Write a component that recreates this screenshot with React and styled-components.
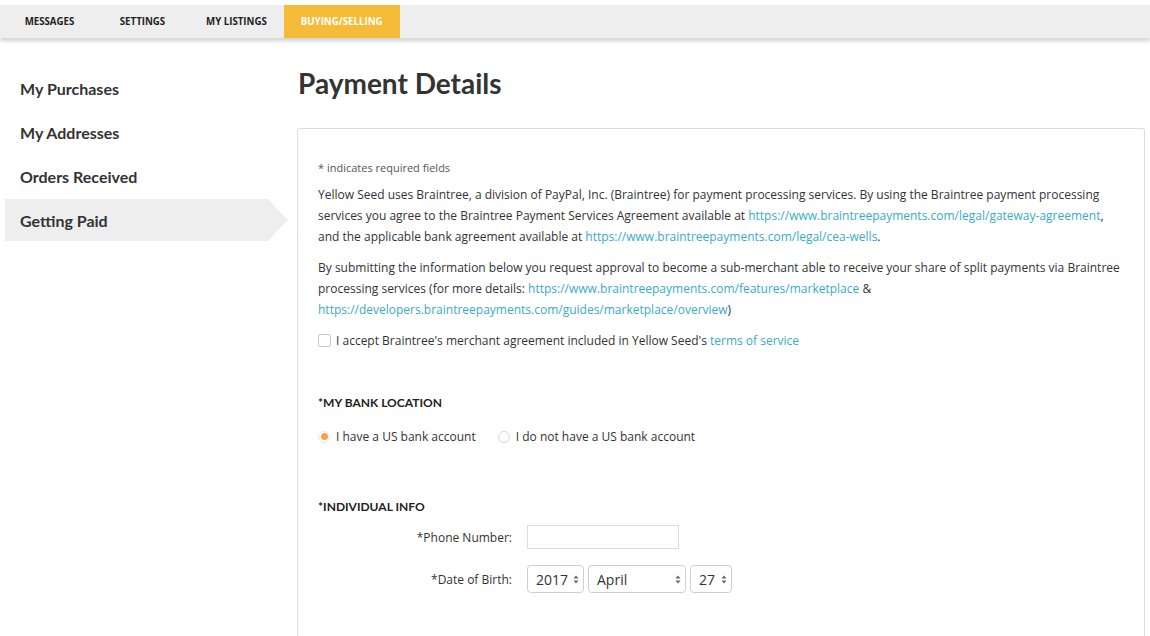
import React from "react";
import styled, { createGlobalStyle } from "styled-components";

const Global = createGlobalStyle`
  html, body { margin: 0; padding: 0; background: #fff; }
  body { font-family: "Open Sans", "Liberation Sans", sans-serif; color: #333; }
  * { box-sizing: border-box; }
`;

const Page = styled.div`
  width: 1150px;
  padding-top: 5px;
`;

const NavBar = styled.nav`
  display: flex;
  height: 33px;
  background: #eeeeee;
  padding-left: 3px;
  box-shadow: 0 3px 4px rgba(0, 0, 0, 0.18);
  position: relative;
  z-index: 1;
`;

const Tab = styled.a`
  display: flex;
  align-items: center;
  justify-content: center;
  min-width: 93px;
  padding: 0 17px;
  font-family: "Open Sans", sans-serif;
  font-weight: 700;
  font-size: 9.7px;
  color: ${(p) => (p.$active ? "#fff" : "#222")};
  background: ${(p) => (p.$active ? "#f7bb3a" : "transparent")};
  text-transform: uppercase;
  text-decoration: none;
`;

const Body = styled.div`
  display: flex;
  align-items: flex-start;
`;

const Sidebar = styled.aside`
  width: 297px;
  flex-shrink: 0;
  padding-left: 5px;
  padding-top: 29px;
  display: flex;
  flex-direction: column;
  gap: 2px;
`;

const SideItem = styled.a`
  position: relative;
  display: flex;
  align-items: center;
  height: 42px;
  width: 263px;
  padding-left: 15px;
  font-family: Lato, sans-serif;
  font-weight: 700;
  font-size: 16px;
  color: #333;
  text-decoration: none;
  background: ${(p) => (p.$active ? "#eeeeee" : "transparent")};
  &::after {
    content: "";
    display: ${(p) => (p.$active ? "block" : "none")};
    position: absolute;
    right: -20px;
    top: 0;
    border-top: 21px solid transparent;
    border-bottom: 21px solid transparent;
    border-left: 20px solid #eeeeee;
  }
`;

const Main = styled.main`
  width: 848px;
  padding-top: 28px;
`;

const Title = styled.h1`
  margin: 0 0 28px 1px;
  font-family: Lato, sans-serif;
  font-weight: 700;
  font-size: 28px;
  line-height: 34px;
  color: #333;
`;

const Panel = styled.section`
  border: 1px solid #dddddd;
  border-radius: 3px;
  border-bottom: none;
  padding: 30px 20px 40px 20px;
  min-height: 520px;
`;

const Required = styled.div`
  font-size: 11px;
  line-height: 18px;
  color: #555;
  margin-bottom: 7px;
`;

const Para = styled.p`
  margin: 0 0 10px;
  font-size: 12px;
  line-height: 21px;
  color: #333;
`;

const Link = styled.a`
  color: #38abc6;
  text-decoration: none;
`;

const CheckRow = styled.label`
  display: flex;
  align-items: center;
  gap: 5px;
  height: 21px;
  font-size: 12px;
  color: #333;
`;

const Checkbox = styled.span`
  width: 13px;
  height: 13px;
  border: 1px solid #c8c8c8;
  border-radius: 2px;
  background: #fff;
`;

const SectionTitle = styled.h3`
  margin: ${(p) => p.$mt}px 0 0;
  font-family: Lato, sans-serif;
  font-weight: 700;
  font-size: 12px;
  line-height: 18px;
  color: #222;
  text-transform: uppercase;
`;

const RadioGroup = styled.div`
  display: flex;
  align-items: center;
  gap: 22px;
  margin-top: 14px;
`;

const RadioLabel = styled.label`
  display: flex;
  align-items: center;
  gap: 6px;
  font-size: 12px;
  line-height: 21px;
  color: #333;
`;

const Radio = styled.span`
  width: 12px;
  height: 12px;
  border-radius: 50%;
  border: 1px solid ${(p) => (p.$checked ? "#e6e6e6" : "#d6d6d6")};
  background: #fff;
  display: flex;
  align-items: center;
  justify-content: center;
  &::after {
    content: "";
    display: ${(p) => (p.$checked ? "block" : "none")};
    width: 7px;
    height: 7px;
    border-radius: 50%;
    background: #f5a540;
  }
`;

const FormGrid = styled.div`
  display: grid;
  grid-template-columns: 194px auto;
  column-gap: 15px;
  row-gap: 16px;
  align-items: center;
  margin-top: 9px;
`;

const FieldLabel = styled.label`
  text-align: right;
  font-size: 12px;
  color: #333;
`;

const TextInput = styled.input`
  width: 152px;
  height: 24px;
  border: 1px solid #dcdcdc;
  border-radius: 0;
  padding: 0 6px;
  font: inherit;
`;

const SelectRow = styled.div`
  display: flex;
  gap: 4px;
`;

const SelectWrap = styled.div`
  position: relative;
  width: ${(p) => p.$w}px;
  height: 28px;
`;

const Select = styled.select`
  appearance: none;
  -webkit-appearance: none;
  width: 100%;
  height: 100%;
  border: 1px solid #cfcfcf;
  border-radius: 4px;
  background: #fff;
  padding: 0 0 0 8px;
  font-family: "Open Sans", sans-serif;
  font-size: 14px;
  color: #333;
`;

const Arrows = styled.svg`
  position: absolute;
  right: 5px;
  top: 9.5px;
  pointer-events: none;
`;

const DateSelect = ({ w, value, options }) => (
  <SelectWrap $w={w}>
    <Select defaultValue={value}>
      {options.map((o) => (
        <option key={o}>{o}</option>
      ))}
    </Select>
    <Arrows width="6" height="9" viewBox="0 0 6 9">
      <path d="M3 0.5 L5.5 3.6 L0.5 3.6 Z" fill="#666" />
      <path d="M0.5 5.4 L5.5 5.4 L3 8.5 Z" fill="#666" />
    </Arrows>
  </SelectWrap>
);

export default function App() {
  return (
    <Page>
      <Global />
      <NavBar>
        <Tab>Messages</Tab>
        <Tab>Settings</Tab>
        <Tab>My Listings</Tab>
        <Tab $active>Buying/Selling</Tab>
      </NavBar>
      <Body>
        <Sidebar>
          <SideItem>My Purchases</SideItem>
          <SideItem>My Addresses</SideItem>
          <SideItem>Orders Received</SideItem>
          <SideItem $active>Getting Paid</SideItem>
        </Sidebar>
        <Main>
          <Title>Payment Details</Title>
          <Panel>
            <Required>* indicates required fields</Required>
            <Para>
              Yellow Seed uses Braintree, a division of PayPal, Inc. (Braintree) for payment
              processing services. By using the Braintree payment processing services you agree
              to the Braintree Payment Services Agreement available at{" "}
              <Link>https://www.braintreepayments.com/legal/gateway-agreement</Link>, and the
              applicable bank agreement available at{" "}
              <Link>https://www.braintreepayments.com/legal/cea-wells</Link>.
            </Para>
            <Para>
              By submitting the information below you request approval to become a sub-merchant
              able to receive your share of split payments via Braintree processing services (for
              more details: <Link>https://www.braintreepayments.com/features/marketplace</Link>{" "}
              &amp; <Link>https://developers.braintreepayments.com/guides/marketplace/overview</Link>)
            </Para>
            <CheckRow>
              <Checkbox />
              <span>
                I accept Braintree's merchant agreement included in Yellow Seed's{" "}
                <Link>terms of service</Link>
              </span>
            </CheckRow>

            <SectionTitle $mt={43}>*My Bank Location</SectionTitle>
            <RadioGroup>
              <RadioLabel>
                <Radio $checked />
                I have a US bank account
              </RadioLabel>
              <RadioLabel>
                <Radio />
                I do not have a US bank account
              </RadioLabel>
            </RadioGroup>

            <SectionTitle $mt={51}>*Individual Info</SectionTitle>
            <FormGrid>
              <FieldLabel>*Phone Number:</FieldLabel>
              <TextInput type="text" />
              <FieldLabel>*Date of Birth:</FieldLabel>
              <SelectRow>
                <DateSelect w={57} value="2017" options={["2017", "2016", "2015"]} />
                <DateSelect
                  w={98}
                  value="April"
                  options={["January", "February", "March", "April", "May"]}
                />
                <DateSelect w={42} value="27" options={["26", "27", "28"]} />
              </SelectRow>
            </FormGrid>
          </Panel>
        </Main>
      </Body>
    </Page>
  );
}
